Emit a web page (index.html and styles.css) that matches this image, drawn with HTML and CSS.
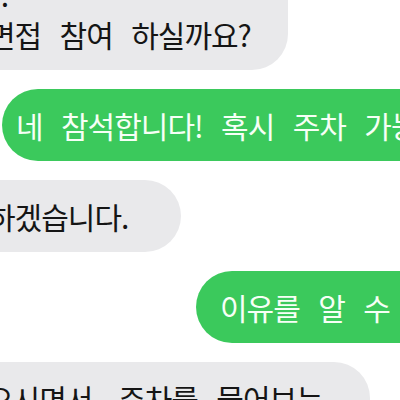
FILE: index.html
```html
<!DOCTYPE html>
<html lang="ko">
<head>
    <meta charset="UTF-8">
    <meta name="viewport" content="width=device-width, initial-scale=1.0">
    <title>메시지</title>
    <link rel="stylesheet" href="styles.css">
</head>
<body>
    <div class="thread">
        <div class="bubble in b1">오후 2시입니다.<br>면접 참여 하실까요?</div>
        <div class="bubble out b2">네 참석합니다! 혹시 주차 가능한가요?</div>
        <div class="bubble in b3">하겠습니다.</div>
        <div class="bubble out b4">이유를 알 수 있을까요?</div>
        <div class="bubble in b5">오시면서, 주차를 물어보는<br>이유가 궁금해서요.</div>
    </div>
</body>
</html>
```

FILE: styles.css
```css
html { overflow: hidden; background: #fff; }
body { margin: 0; padding: 0; }
.thread { display: flex; flex-direction: column; gap: 19px; margin-top: -42px; width: 400px; }
.bubble { align-self: flex-start; font-family: "Noto Sans CJK KR", sans-serif; font-size: 30px; line-height: 40px; letter-spacing: -1px; word-spacing: 11px; padding: 16px 37px 16px 26px; border-radius: 36px; white-space: nowrap; }
.in { background: #e9e9eb; color: #151515; }
.out { background: #3bc95c; color: #f6fff6; }
.b1 { margin-left: -38px; text-indent: -181px; }
.b2 { margin-left: 2px; padding-left: 14px; }
.b3 { margin-left: -38px; padding-right: 53px; }
.b4 { margin-left: 196px; padding-left: 24px; }
.b5 { margin-left: -40px; padding-right: 47px; }
```
